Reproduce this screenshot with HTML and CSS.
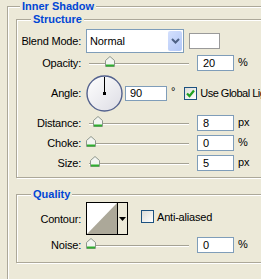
FILE: index.html
```html
<!DOCTYPE html>
<html lang="en">
  <head>
    <meta charset="UTF-8" />
    <title>Inner Shadow</title>
    <link rel="stylesheet" href="styles.css">
  </head>
  <body>
    <fieldset class="group outer">
      <legend>Inner Shadow</legend>

      <fieldset class="group structure">
        <legend>Structure</legend>

        <div class="row row-blend">
          <span class="lbl">Blend Mode:</span>
          <div class="combo">
            <span class="combo-text">Normal</span>
            <span class="combo-btn">
              <svg width="9" height="6" viewBox="0 0 9 6"><path d="M1 1 L4.5 4.5 L8 1" fill="none" stroke="#4d6185" stroke-width="2"/></svg>
            </span>
          </div>
          <span class="swatch"></span>
        </div>

        <div class="row">
          <span class="lbl">Opacity:</span>
          <div class="slider">
            <span class="thumb" style="left:16px"><svg width="10" height="11" viewBox="0 0 10 11"><path d="M5 0.5 L9.5 4.5 V10.5 H0.5 V4.5 Z" fill="#f3f5f1" stroke="#8e978c"/><path d="M1 9.5 H9" stroke="#2fae2f" stroke-width="2"/></svg></span>
          </div>
          <span class="num">20</span><span class="unit">%</span>
        </div>

        <div class="row row-angle">
          <span class="lbl">Angle:</span>
          <svg class="dial" width="37" height="37" viewBox="0 0 37 37">
            <defs>
              <linearGradient id="dialFill" x1="0" y1="0" x2="1" y2="1">
                <stop offset="0" stop-color="#ffffff"/>
                <stop offset="1" stop-color="#dcdce4"/>
              </linearGradient>
            </defs>
            <circle cx="18.5" cy="18.5" r="17.5" fill="url(#dialFill)" stroke="#53618d" stroke-width="1.4"/>
            <path d="M18.5 18.5 V2" stroke="#000" stroke-width="1"/>
            <rect x="17" y="17" width="3" height="3" fill="#000"/>
          </svg>
          <span class="num num-angle">90</span><span class="deg">°</span>
          <span class="check checked">
            <svg width="11" height="11" viewBox="0 0 11 11"><path d="M2 5.5 L4.5 8 L9 2.5" fill="none" stroke="#21a121" stroke-width="2.2"/></svg>
          </span>
          <span class="check-text check-global">Use Global Light</span>
        </div>

        <div class="row">
          <span class="lbl">Distance:</span>
          <div class="slider">
            <span class="thumb" style="left:4px"><svg width="10" height="11" viewBox="0 0 10 11"><path d="M5 0.5 L9.5 4.5 V10.5 H0.5 V4.5 Z" fill="#f3f5f1" stroke="#8e978c"/><path d="M1 9.5 H9" stroke="#2fae2f" stroke-width="2"/></svg></span>
          </div>
          <span class="num">8</span><span class="unit">px</span>
        </div>

        <div class="row">
          <span class="lbl">Choke:</span>
          <div class="slider">
            <span class="thumb" style="left:-3px"><svg width="10" height="11" viewBox="0 0 10 11"><path d="M5 0.5 L9.5 4.5 V10.5 H0.5 V4.5 Z" fill="#f3f5f1" stroke="#8e978c"/><path d="M1 9.5 H9" stroke="#2fae2f" stroke-width="2"/></svg></span>
          </div>
          <span class="num">0</span><span class="unit">%</span>
        </div>

        <div class="row">
          <span class="lbl">Size:</span>
          <div class="slider">
            <span class="thumb" style="left:1px"><svg width="10" height="11" viewBox="0 0 10 11"><path d="M5 0.5 L9.5 4.5 V10.5 H0.5 V4.5 Z" fill="#f3f5f1" stroke="#8e978c"/><path d="M1 9.5 H9" stroke="#2fae2f" stroke-width="2"/></svg></span>
          </div>
          <span class="num">5</span><span class="unit">px</span>
        </div>
      </fieldset>

      <fieldset class="group quality">
        <legend>Quality</legend>

        <div class="row row-contour">
          <span class="lbl">Contour:</span>
          <div class="contour">
            <svg class="contour-curve" width="30" height="31" viewBox="0 0 30 31"><path d="M0 31 L30 0 V31 Z" fill="#aca899"/></svg>
            <span class="contour-btn">
              <svg width="7" height="4" viewBox="0 0 7 4"><path d="M0 0 H7 L3.5 4 Z" fill="#000"/></svg>
            </span>
          </div>
          <span class="check check-aa"></span>
          <span class="check-text">Anti-aliased</span>
        </div>

        <div class="row">
          <span class="lbl">Noise:</span>
          <div class="slider">
            <span class="thumb" style="left:-3px"><svg width="10" height="11" viewBox="0 0 10 11"><path d="M5 0.5 L9.5 4.5 V10.5 H0.5 V4.5 Z" fill="#f3f5f1" stroke="#8e978c"/><path d="M1 9.5 H9" stroke="#2fae2f" stroke-width="2"/></svg></span>
          </div>
          <span class="num">0</span><span class="unit">%</span>
        </div>
      </fieldset>
    </fieldset>
  </body>
</html>
```

FILE: styles.css
```css
html,
body {
  margin: 0;
  overflow: hidden;
}

body {
  background-color: #ece9d8;
  color: #000;
  font-family: "Liberation Sans", Arial, sans-serif;
  font-size: 11px;
  letter-spacing: -0.2px;
  width: 261px;
  height: 279px;
}

.group {
  border: 1px solid #aca899;
  box-shadow: inset 1px 1px 0 #fff, 1px 1px 0 #fff;
  margin: 0;
  padding: 0;
  min-width: 0;
}

.group > legend {
  color: #0046d5;
  font-weight: bold;
  line-height: 13px;
  padding: 0 2px;
  background-color: #ece9d8;
  letter-spacing: 0;
}

.outer {
  margin-left: 7px;
  width: 320px;
  padding: 0 0 40px 8px;
}

.outer > legend {
  margin-left: 4px;
}

.structure {
  width: 300px;
  padding: 3px 0 4px;
}

.structure > legend {
  margin-left: 14px;
}

.quality {
  width: 300px;
  margin-top: 10px;
  padding: 1px 0 7px;
}

.quality > legend {
  margin-left: 14px;
}

/* rows */
.row {
  display: flex;
  align-items: center;
  height: 20px;
  white-space: nowrap;
}

.row-blend {
  height: 24px;
}

.row-angle {
  height: 40px;
}

.row-contour {
  height: 33px;
}

.lbl {
  flex: none;
  width: 64px;
  text-align: right;
}

/* blend mode combo */
.combo {
  display: flex;
  box-sizing: border-box;
  width: 98px;
  height: 24px;
  margin-left: 5px;
  border: 1px solid #7f9db9;
  background-color: #fff;
}

.combo-text {
  flex: 1;
  padding-left: 3px;
  line-height: 22px;
  font-size: 11px;
  letter-spacing: -0.1px;
}

.combo-btn {
  display: flex;
  align-items: center;
  justify-content: center;
  width: 14px;
  margin: 1px;
  border-radius: 2px;
  background: linear-gradient(135deg, #d4e0fd, #b2c7f7);
}

.swatch {
  box-sizing: border-box;
  width: 31px;
  height: 16px;
  margin: -1px 0 0 5px;
  border: 1px solid #9a9a9a;
  background-color: #fff;
}

/* sliders */
.slider {
  position: relative;
  flex: none;
  width: 100px;
  height: 2px;
  margin: 2px 0 0 8px;
  border-top: 1px solid #a5a294;
  border-bottom: 1px solid #fff;
  box-sizing: border-box;
}

.thumb {
  position: absolute;
  top: -8px;
  width: 10px;
  height: 11px;
}

.thumb svg {
  display: block;
}

.num {
  box-sizing: border-box;
  width: 37px;
  height: 16px;
  margin-left: 8px;
  padding-left: 5px;
  border: 1px solid #7f9db9;
  background-color: #fff;
  line-height: 14px;
}

.unit {
  margin-left: 4px;
  align-self: flex-start;
  margin-top: 3px;
}

/* angle */
.dial {
  flex: none;
  margin-left: 5px;
}

.num-angle {
  width: 42px;
  height: 15px;
  margin-left: 2px;
  padding-left: 4px;
  line-height: 13px;
}

.deg {
  margin-left: 4px;
  margin-top: -5px;
}

.check {
  display: flex;
  align-items: center;
  justify-content: center;
  box-sizing: border-box;
  width: 13px;
  height: 13px;
  margin-left: 9px;
  border: 1px solid #1c5180;
  background: linear-gradient(135deg, #dcdcd7, #fff);
}

.check-text {
  margin-left: 3px;
}

.check-global {
  letter-spacing: -0.5px;
}

/* contour */
.contour {
  display: flex;
  box-sizing: border-box;
  width: 42px;
  height: 33px;
  margin-left: 5px;
  border: 1px solid #000;
  background-color: #fff;
}

.contour-curve {
  display: block;
  width: 30px;
  height: 31px;
  border-right: 1px solid #000;
}

.contour-btn {
  display: flex;
  align-items: center;
  justify-content: center;
  flex: 1;
  background-color: #ece9d8;
}

.check-aa {
  margin-left: 13px;
  margin-top: -4px;
}

.check-aa + .check-text {
  margin-top: -4px;
}
```
